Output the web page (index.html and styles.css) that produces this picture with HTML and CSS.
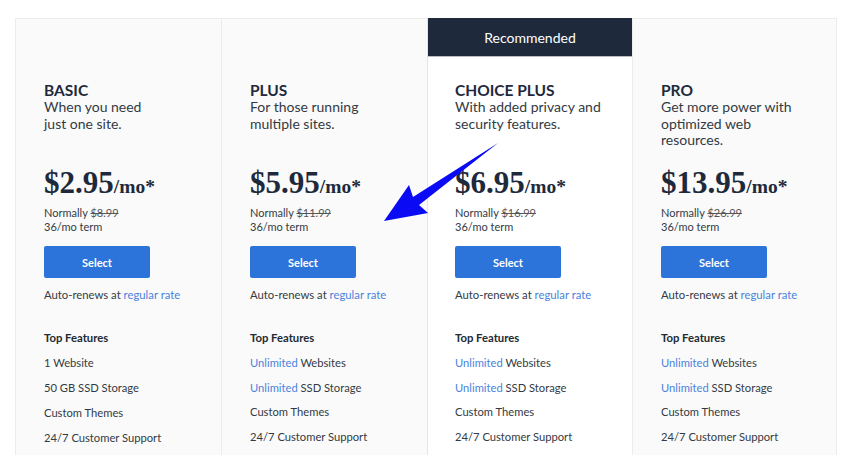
FILE: index.html
```html
<!DOCTYPE html>
<html>
<head>
<meta charset="utf-8">
<link rel="stylesheet" href="styles.css">
</head>
<body>
<div class="plans">
  <div class="card">
    <div class="head-space"></div>
    <div class="intro">
      <div class="name">BASIC</div>
      <div class="desc">When you need<br>just one site.</div>
    </div>
    <div class="price">$2.95<span class="per">/mo*</span></div>
    <div class="note">Normally <s>$8.99</s></div>
    <div class="note">36/mo term</div>
    <div class="btn">Select</div>
    <div class="renew">Auto-renews at <a class="link">regular rate</a></div>
    <div class="feat-title">Top Features</div>
    <ul class="features">
      <li>1 Website</li>
      <li>50 GB SSD Storage</li>
      <li>Custom Themes</li>
      <li>24/7 Customer Support</li>
    </ul>
  </div>
  <div class="card">
    <div class="head-space"></div>
    <div class="intro">
      <div class="name">PLUS</div>
      <div class="desc">For those running<br>multiple sites.</div>
    </div>
    <div class="price">$5.95<span class="per">/mo*</span></div>
    <div class="note">Normally <s>$11.99</s></div>
    <div class="note">36/mo term</div>
    <div class="btn">Select</div>
    <div class="renew">Auto-renews at <a class="link">regular rate</a></div>
    <div class="feat-title">Top Features</div>
    <ul class="features tight">
      <li><span class="link">Unlimited</span> Websites</li>
      <li><span class="link">Unlimited</span> SSD Storage</li>
      <li>Custom Themes</li>
      <li>24/7 Customer Support</li>
    </ul>
  </div>
  <div class="card rec">
    <div class="head-space rec-head">Recommended</div>
    <div class="intro">
      <div class="name">CHOICE PLUS</div>
      <div class="desc">With added privacy and<br>security features.</div>
    </div>
    <div class="price">$6.95<span class="per">/mo*</span></div>
    <div class="note">Normally <s>$16.99</s></div>
    <div class="note">36/mo term</div>
    <div class="btn">Select</div>
    <div class="renew">Auto-renews at <a class="link">regular rate</a></div>
    <div class="feat-title">Top Features</div>
    <ul class="features tight">
      <li><span class="link">Unlimited</span> Websites</li>
      <li><span class="link">Unlimited</span> SSD Storage</li>
      <li>Custom Themes</li>
      <li>24/7 Customer Support</li>
    </ul>
  </div>
  <div class="card">
    <div class="head-space"></div>
    <div class="intro">
      <div class="name">PRO</div>
      <div class="desc">Get more power with<br>optimized web<br>resources.</div>
    </div>
    <div class="price">$13.95<span class="per">/mo*</span></div>
    <div class="note">Normally <s>$26.99</s></div>
    <div class="note">36/mo term</div>
    <div class="btn">Select</div>
    <div class="renew">Auto-renews at <a class="link">regular rate</a></div>
    <div class="feat-title">Top Features</div>
    <ul class="features tight">
      <li><span class="link">Unlimited</span> Websites</li>
      <li><span class="link">Unlimited</span> SSD Storage</li>
      <li>Custom Themes</li>
      <li>24/7 Customer Support</li>
    </ul>
  </div>
  <svg class="arrow" width="850" height="455" viewBox="0 0 850 455">
    <polygon points="384,221 409,185 413,197 498,143 419,205 428,213" fill="#0a0af5"/>
  </svg>
</div>
</body>
</html>
```

FILE: styles.css
```css
html, body {
  margin: 0;
  padding: 0;
  background: #ffffff;
}
body {
  font-family: Lato, "Open Sans", sans-serif;
  color: #333a44;
  width: 850px;
  height: 455px;
  overflow: hidden;
}
.plans {
  display: grid;
  grid-template-columns: 206px 206px 205px 205px;
  margin: 18px 0 0 15px;
  width: 822px;
  height: 437px;
  overflow: hidden;
}
.card {
  background: #fafafa;
  border-left: 1px solid #ececec;
  border-top: 1px solid #ececec;
  padding: 0 0 0 28px;
  box-sizing: border-box;
}
.card:last-of-type {
  border-right: 1px solid #ececec;
}
.card.rec {
  background: #ffffff;
  border-top: none;
  border-left: 1px solid #e4e4e4;
  padding-left: 0;
}
.card.rec > *:not(.rec-head) {
  margin-left: 27px;
}
.head-space {
  height: 38px;
}
.rec-head {
  height: 39px;
  background: #1e2a3c;
  border-bottom: 1px solid #b9bdc3;
  box-sizing: border-box;
  color: #ffffff;
  font-size: 14px;
  display: flex;
  align-items: center;
  justify-content: center;
}
.intro {
  padding-top: 25px;
  height: 83px;
}
.name {
  font-size: 15.5px;
  font-weight: 700;
  color: #1e2a3c;
  line-height: 17px;
}
.desc {
  font-size: 14px;
  line-height: 16.5px;
  color: #333a44;
}
.price {
  font-family: "Liberation Serif", serif;
  font-weight: 700;
  font-size: 31px;
  line-height: 36px;
  color: #1e2a3c;
  margin-bottom: 1px;
}
.per {
  font-size: 19.5px;
}
.note {
  font-size: 11px;
  line-height: 14px;
  color: #333a44;
}
.note s {
  color: #555;
}
.btn {
  width: 106px;
  height: 32px;
  margin-top: 12px;
  background: #2d74da;
  border-radius: 2px;
  color: #ffffff;
  font-size: 11px;
  font-weight: 700;
  display: flex;
  align-items: center;
  justify-content: center;
}
.renew {
  font-size: 11.3px;
  line-height: 16px;
  margin-top: 9px;
}
.link {
  color: #4a82dc;
}
.feat-title {
  font-size: 11.3px;
  font-weight: 700;
  line-height: 16px;
  margin-top: 27px;
  color: #222a33;
}
.features {
  list-style: none;
  margin: 4px 0 0;
  padding: 0;
  font-size: 11.2px;
  line-height: 25px;
}
.features.tight {
  line-height: 24.7px;
  margin-top: 5px;
}
.arrow {
  position: absolute;
  left: 0;
  top: 0;
  pointer-events: none;
}
```
